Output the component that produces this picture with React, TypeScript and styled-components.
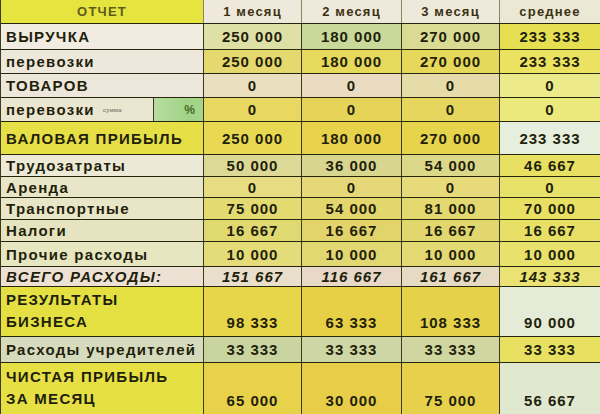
import React from "react";
import styled, { createGlobalStyle } from "styled-components";

const GlobalStyle = createGlobalStyle`
  html, body {
    margin: 0;
    padding: 0;
    background: #e6e2c4;
    overflow: hidden;
  }
  * {
    box-sizing: border-box;
  }
`;

type RowData = {
  label: string[];
  values: string[];
  h: number;
  labelBg: string;
  valueBg: string[];
  italic?: boolean;
  percent?: boolean;
};

const rows: RowData[] = [
  {
    label: ["ВЫРУЧКА"],
    values: ["250 000", "180 000", "270 000", "233 333"],
    h: 26,
    labelBg: "#f1ebe2",
    valueBg: ["#dfe0a6", "#c9d99a", "#d9db94", "#e6df52"],
  },
  {
    label: ["перевозки"],
    values: ["250 000", "180 000", "270 000", "233 333"],
    h: 24,
    labelBg: "#eee8dc",
    valueBg: ["#e4d86e", "#e6d95c", "#e6d85a", "#ebe262"],
  },
  {
    label: ["ТОВАРОВ"],
    values: ["0", "0", "0", "0"],
    h: 24,
    labelBg: "#ede6da",
    valueBg: ["#eadfbe", "#eadcc0", "#e6dcaa", "#ecea8a"],
  },
  {
    label: ["перевозки"],
    values: ["0", "0", "0", "0"],
    h: 24,
    labelBg: "#ebe6d0",
    valueBg: ["#e8d862", "#e6d458", "#e6d65e", "#ebe87c"],
    percent: true,
  },
  {
    label: ["ВАЛОВАЯ ПРИБЫЛЬ"],
    values: ["250 000", "180 000", "270 000", "233 333"],
    h: 33,
    labelBg: "#e6df46",
    valueBg: ["#e8d852", "#e8d24c", "#e6d44c", "#e6eede"],
  },
  {
    label: ["Трудозатраты"],
    values: ["50 000", "36 000", "54 000", "46 667"],
    h: 22,
    labelBg: "#ecead6",
    valueBg: ["#dcd996", "#d8d68e", "#dcd88a", "#e8e062"],
  },
  {
    label: ["Аренда"],
    values: ["0", "0", "0", "0"],
    h: 21,
    labelBg: "#e9e5c8",
    valueBg: ["#e8dc82", "#e6d878", "#e6da7a", "#e8e26a"],
  },
  {
    label: ["Транспортные"],
    values: ["75 000", "54 000", "81 000", "70 000"],
    h: 22,
    labelBg: "#e8e6c6",
    valueBg: ["#e4da72", "#e2d66c", "#e4d870", "#e8e062"],
  },
  {
    label: ["Налоги"],
    values: ["16 667", "16 667", "16 667", "16 667"],
    h: 22,
    labelBg: "#e6e4c0",
    valueBg: ["#e0d870", "#e2d46a", "#e2d66e", "#e8e066"],
  },
  {
    label: ["Прочие расходы"],
    values: ["10 000", "10 000", "10 000", "10 000"],
    h: 25,
    labelBg: "#e6e6c0",
    valueBg: ["#e4dc78", "#e2d872", "#e4da74", "#e8e26c"],
  },
  {
    label: ["ВСЕГО РАСХОДЫ:"],
    values: ["151 667", "116 667", "161 667", "143 333"],
    h: 20,
    labelBg: "#ede1d4",
    valueBg: ["#eadfcc", "#e8d8c8", "#e6dac4", "#eae274"],
    italic: true,
  },
  {
    label: ["РЕЗУЛЬТАТЫ", "БИЗНЕСА"],
    values: ["98 333", "63 333", "108 333", "90 000"],
    h: 50,
    labelBg: "#e4e042",
    valueBg: ["#e8d64a", "#e8d046", "#e6d24a", "#e4ebd6"],
  },
  {
    label: ["Расходы учредителей"],
    values: ["33 333", "33 333", "33 333", "33 333"],
    h: 26,
    labelBg: "#d6dbbe",
    valueBg: ["#c9d4a0", "#cdd6a4", "#d0d6a0", "#e8e060"],
  },
  {
    label: ["ЧИСТАЯ ПРИБЫЛЬ", "ЗА МЕСЯЦ"],
    values: ["65 000", "30 000", "75 000", "56 667"],
    h: 51,
    labelBg: "#e6e044",
    valueBg: ["#e8d24a", "#e8ce48", "#e6d04c", "#e0e8d0"],
  },
];

const months = ["1 месяц", "2 месяц", "3 месяц", "среднее"];

const Sheet = styled.div`
  width: 600px;
  height: 414px;
  display: flex;
  flex-direction: column;
  border-left: 1px solid #3a3a1c;
  font-family: "Liberation Sans", Arial, sans-serif;
  font-weight: 700;
  color: #1f1f0c;
`;

const Row = styled.div<{ $h: number }>`
  height: ${(p) => p.$h}px;
  display: grid;
  grid-template-columns: 202px 98px 100px 98px 1fr;
  border-bottom: 1.5px solid #26260f;
  &:last-child {
    border-bottom: none;
  }
`;

const HeadCell = styled.div<{ $bg: string; $dim?: boolean }>`
  background: ${(p) => p.$bg};
  display: flex;
  align-items: center;
  justify-content: center;
  font-size: 13px;
  letter-spacing: 1.2px;
  color: ${(p) => (p.$dim ? "#5e5c1c" : "#3a3212")};
  & + & {
    border-left: 1px solid #8a8660;
  }
`;

const LabelCell = styled.div<{ $bg: string; $italic?: boolean; $multi?: boolean }>`
  background: ${(p) => p.$bg};
  display: flex;
  flex-direction: column;
  justify-content: ${(p) => (p.$multi ? "space-around" : "center")};
  padding: ${(p) => (p.$multi ? "2px 0 4px 5px" : "0 0 0 5px")};
  font-size: 15px;
  letter-spacing: 1.3px;
  font-style: ${(p) => (p.$italic ? "italic" : "normal")};
  white-space: nowrap;
  overflow: hidden;
`;

const SplitLabel = styled.div<{ $bg: string }>`
  display: grid;
  grid-template-columns: 152px 1fr;
  background: ${(p) => p.$bg};
`;

const SplitText = styled.div`
  display: flex;
  align-items: center;
  gap: 8px;
  padding-left: 5px;
  font-size: 15px;
  letter-spacing: 1.3px;
`;

const Tiny = styled.span`
  font-size: 6px;
  letter-spacing: 0;
  color: #8a8a80;
  font-weight: 700;
`;

const PercentCell = styled.div`
  border-left: 1px solid #3a3a1c;
  background: linear-gradient(90deg, #b8dca0 0%, #9fd486 70%, #a6d48a 100%);
  display: flex;
  align-items: center;
  justify-content: flex-end;
  padding-right: 8px;
  font-size: 12px;
  color: #4a6a2a;
`;

const ValueCell = styled.div<{ $bg: string; $italic?: boolean; $bottom?: boolean }>`
  background: ${(p) => p.$bg};
  border-left: 1px solid #3a3a1c;
  display: flex;
  justify-content: center;
  align-items: ${(p) => (p.$bottom ? "flex-end" : "center")};
  padding-bottom: ${(p) => (p.$bottom ? "5px" : "0")};
  font-size: 15px;
  letter-spacing: 1px;
  font-style: ${(p) => (p.$italic ? "italic" : "normal")};
  white-space: nowrap;
`;

export default function App() {
  return (
    <>
      <GlobalStyle />
      <Sheet>
        <Row $h={24}>
          <HeadCell $bg="#e6e43e" $dim>
            ОТЧЕТ
          </HeadCell>
          {months.map((m, i) => (
            <HeadCell key={m} $bg={i === 3 ? "#ebe8d6" : "#efe9dc"}>
              {m}
            </HeadCell>
          ))}
        </Row>
        {rows.map((r, idx) => (
          <Row key={idx} $h={r.h}>
            {r.percent ? (
              <SplitLabel $bg={r.labelBg}>
                <SplitText>
                  {r.label[0]}
                  <Tiny>сумма</Tiny>
                </SplitText>
                <PercentCell>%</PercentCell>
              </SplitLabel>
            ) : (
              <LabelCell
                $bg={r.labelBg}
                $italic={r.italic}
                $multi={r.label.length > 1}
              >
                {r.label.map((l) => (
                  <span key={l}>{l}</span>
                ))}
              </LabelCell>
            )}
            {r.values.map((v, i) => (
              <ValueCell
                key={i}
                $bg={r.valueBg[i]}
                $italic={r.italic}
                $bottom={r.label.length > 1}
              >
                {v}
              </ValueCell>
            ))}
          </Row>
        ))}
      </Sheet>
    </>
  );
}
